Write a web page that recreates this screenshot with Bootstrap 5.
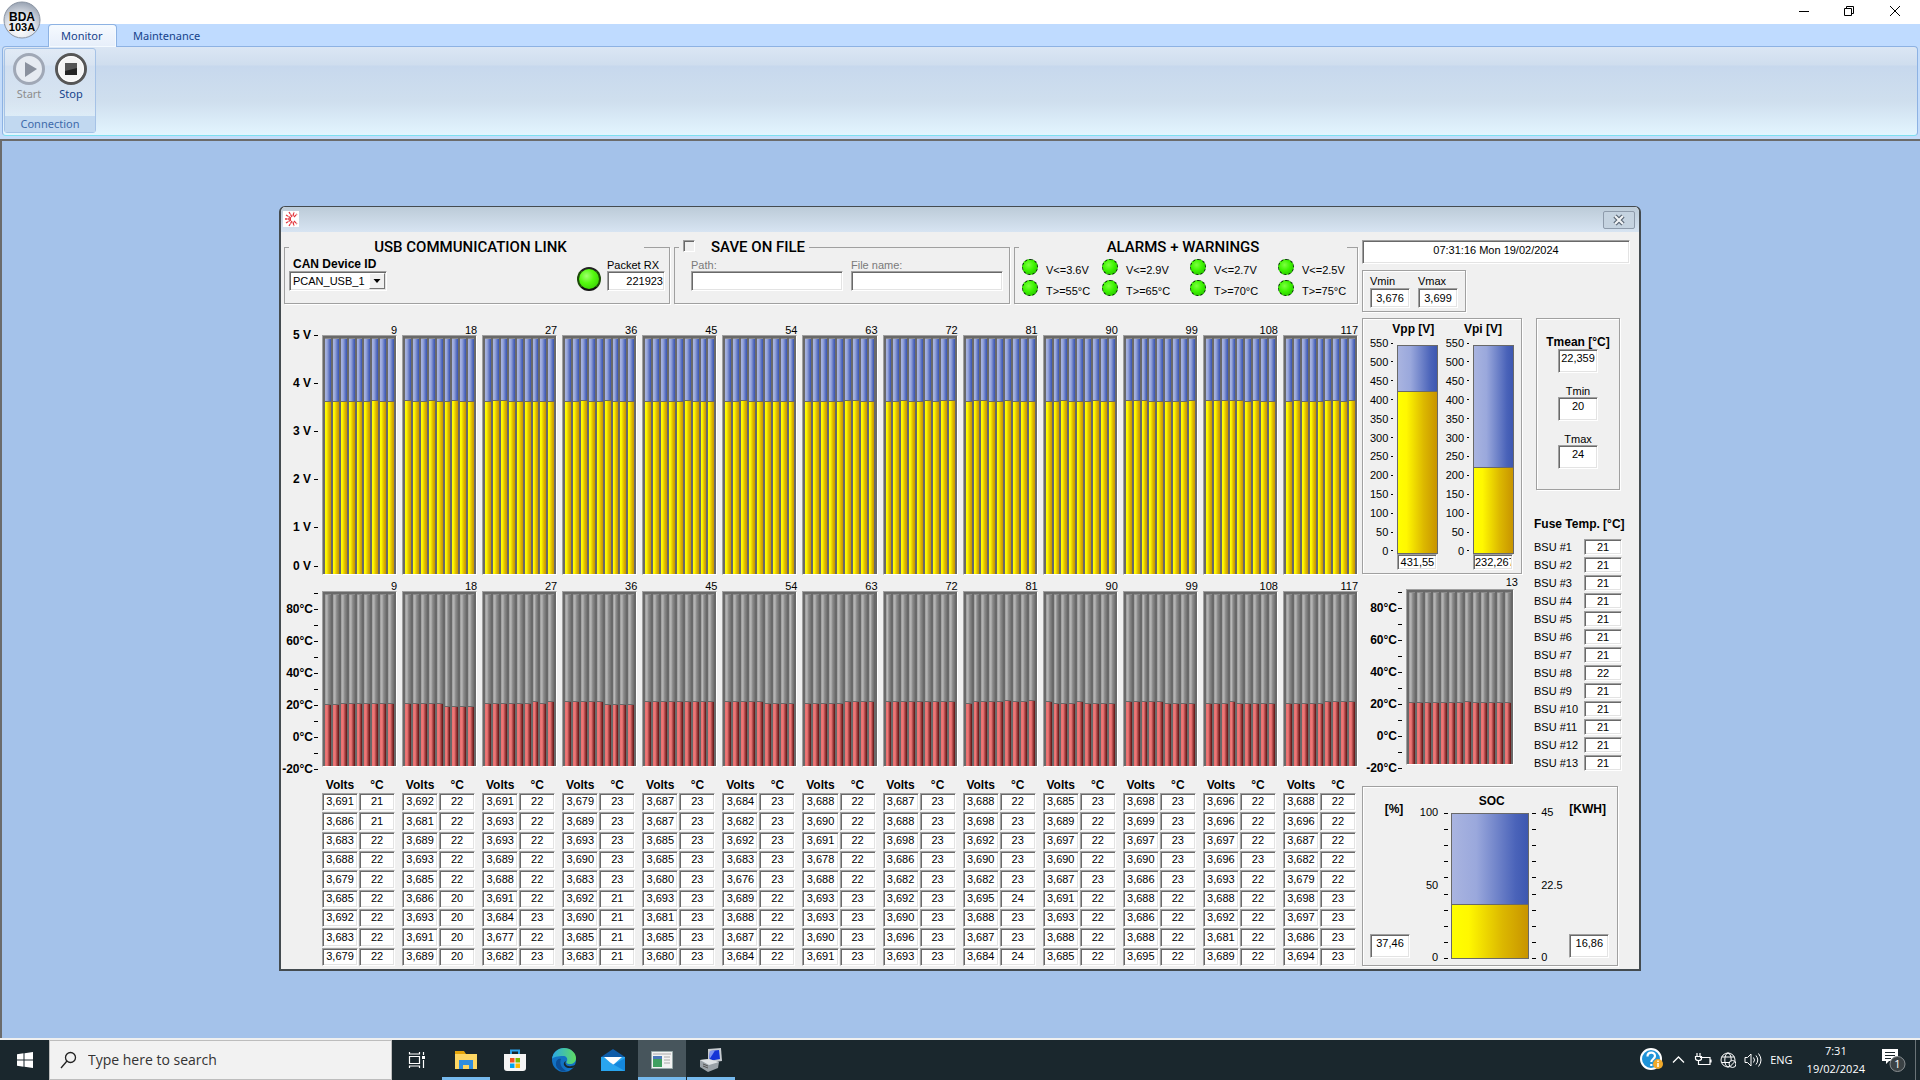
<!DOCTYPE html>
<html lang="en">
<head>
<meta charset="utf-8">
<meta name="viewport" content="width=device-width, initial-scale=1">
<title>BDA 103A Monitor</title>
<link href="https://cdn.jsdelivr.net/npm/bootstrap@5.3.0/dist/css/bootstrap.min.css" rel="stylesheet">
<style>
:root{--edge:#a0a0a0;--dark:#696969;--blue:linear-gradient(90deg,#a9b4e0,#9aa8dc 32%,#4a63b9 84%,#3d57b0);--gold:linear-gradient(90deg,#ffff00,#fff800 22%,#dcb800 66%,#c89400)}
body{font-family:"Liberation Sans",Arial,sans-serif;font-size:11px;line-height:12px;color:#000;background:#fff}
.shell{min-height:100vh}
/* ribbon */
.caption-bar{height:24px;background:#fff;padding-right:2px}
.cap-btn{width:46px;height:22px;border:0;background:none;padding:0}
.orb{left:3px;top:1px;z-index:5}
.tab-strip{height:22px;background:#bfdbff;padding-left:48px;font:11px/20px "Noto Sans",sans-serif}
.tab-strip a{color:#15428b;text-decoration:none;padding:2px 12px 0}
.tab-strip a.current{width:69px;border:1px solid #8db2e3;border-bottom:0;border-radius:4px 4px 0 0;background:linear-gradient(#f6faff,#e6eefa);margin-bottom:-1px;padding-top:1px;z-index:2;box-shadow:inset 0 0 0 1px #f4faff}
.ribbon-wrap{background:#c4dcfa;padding:0 2px 3px}
.ribbon{border:1px solid #8db2e3;border-color:#8db2e3 #8db2e3 #7ee0f0;border-radius:4px;height:90px;padding:1px;background:linear-gradient(#dbe6f4 0,#cfddee 18px,#c7d8ed 19px,#cfdfee 55px,#e3f5ff)}
.rgroup{width:92px;height:85px;border:1px solid #a5c2e6;border-radius:3px;background:linear-gradient(rgba(255,255,255,.2),rgba(255,255,255,.15));font:11px/16px "Noto Sans",sans-serif}
.rgroup-items{padding-left:3px}
.rgroup button{border:0;background:none;padding:3px 0 0;width:42px;color:#15428b}
.rgroup button:disabled{color:#8d8d8d}
.rgroup-name{background:#c1d8f0;color:#3e6aaa;height:16px}
/* MDI client */
.mdi{background:#a4c2ea;border:solid #6b6b6b;border-width:2px 0 0 2px;padding:65px 2px 60px 0}
.mdi-end{height:2px;background:#f0f0f0}
.child{max-width:1362px;border:1px solid #444b50;border-width:1px 2px 2px;border-radius:6px 6px 0 0;background:#f0f0f0}
.child-title{height:25px;border-radius:5px 5px 0 0;background:linear-gradient(#bccbd8,#d7e4f2);padding:4px 4px 0 2px}
.child-close{width:32px;height:18px;border:1px solid #8e9bab;border-radius:2px;background:#c5d3e0;padding:0}
.child-body{padding:8px 9px 2px 3px;gap:4px}
/* classic sunken and etched parts */
.etched{border:1px solid var(--edge);box-shadow:1px 1px 0 #fff,inset 1px 1px 0 #fff}
.sunk{background:#fff;border:1px solid;border-color:var(--edge) #fff #fff var(--edge);box-shadow:inset 1px 1px 0 var(--dark),inset -1px -1px 0 #e3e3e3;border-radius:0;padding:0 1px;color:#000;font:11px/14px "Liberation Sans",Arial,sans-serif;text-align:center}
.cap{font-size:12px;line-height:14px;font-weight:700}
.w40{width:40px}.w38{width:38px}
fieldset.gb{border:1px solid var(--edge);height:64px;box-shadow:1px 1px 0 #fff;font-size:11px;line-height:12px}
fieldset.gb legend{float:none;margin:0 0 0 4px;padding:0;text-align:left;font-family:Roboto,"Liberation Sans",sans-serif;font-weight:500;font-size:15px;line-height:14px}
.gb-usb{width:386px}.gb-save{width:336px}.gb-alarm{width:344px}
.gb-usb legend{width:355px}.gb-alarm legend{width:328px}
.gb-save legend{width:fit-content}
.dev-cap{margin-top:3px}
.link-status{gap:6px}
.led-big{margin-top:13px}
.fields{padding-top:5px}
.dim{color:#7a7a7a}
.file-field{width:152px}.rx-field{width:58px}
.gb input.sunk{height:20px}
.gb .tick-box{appearance:none;width:12px;height:12px;margin:0;background:#f0f0f0;border:1px solid;border-color:var(--edge) #fff #fff var(--edge);box-shadow:inset 1px 1px 0 var(--dark)}
.dev{width:98px}
.dev select{appearance:none;width:98px;height:20px;text-align:left;padding-left:3px}
.dev span{right:2px;top:2px;width:16px;height:16px;background:#f0f0f0;border:1px solid;border-color:#fff #777 #777 #fff;pointer-events:none}
.led{width:16px;height:16px;border-radius:50%;border:1px dashed #003000;background:radial-gradient(circle at 40% 35%,#7dff40,#3df400 45%,#22b400)}
.led-big{width:24px;height:24px;border:2px solid #101010;border-color:#222 #1c4a08 #111;background:radial-gradient(circle at 38% 35%,#a2ff70,#55fa10 40%,#2fc000)}
.lamp{padding:5px 0 0 8px}
.lamps{grid-template-columns:80px 88px 88px auto;row-gap:4px;padding:5px 0 0 7px}
/* charts */
.plots{margin-top:5px}
.axis{width:38px;flex:none;font-size:12px;font-weight:700}
.axis i,.scale i,.marks i{width:4px;height:1px;background:#000;flex:none}
.scale i{width:2px}
.axis-v{padding:2px 4px 0 0}
.axis-v div{height:48px;gap:3px}
.axis-v div:last-child{height:24px;padding-top:6px}
.axis-t{padding:10px 4px 0 0}
.axis-t div{height:16px;gap:1px;white-space:nowrap}
.groups{gap:5px}
.groups>div{flex:1 1 0}
.groups-t{padding-top:6px}
.chart{background:var(--dark);border:1px solid;border-color:var(--edge) #fff #fff var(--edge);padding:2px 2px 0;gap:2px}
.chart>div{flex:1 1 0;border-top:1px solid #8a8a8a}
.chart-v{height:240px}.chart-t{height:176px}
.chart-v>div{background:var(--blue)}
.chart-v b{background:var(--gold);border-top:1px solid #696969}
.chart-t>div{background:linear-gradient(90deg,#9a9a9a,#b8b8b8 30%,#8d8d8d 60%,#707070)}
.chart-t b{background:linear-gradient(90deg,#e87070,#f07878 35%,#a84444 65%,#5a1212);border-top:1px solid #696969}
.chart-end{line-height:10px}
.readings{border-collapse:separate;border-spacing:1px;table-layout:fixed;width:100%;margin:0 -1px}
.readings th{font-size:12px;line-height:13px;height:14px;padding:0;text-align:center}
.readings td{height:18px;line-height:15px;padding:0 0 1px}
.readings tbody tr:nth-child(3n+2) td{height:19px}
/* side column */
.side{width:268px;flex:none}
.clock{height:24px;padding-bottom:5px}
.vm{width:104px;height:42px;margin-top:6px;padding:3px 7px;gap:8px}
.vm label{line-height:14px}
.vm input{height:20px}
.mid{margin-top:6px}
.right{margin-left:12px}
.v-box{width:160px;height:256px;padding:3px 7px 0}
.scale{height:220px;justify-content:space-between;margin-top:1px}
.scale div{gap:3px}
.tube{border:1px solid var(--dark);background:var(--blue)}
.tube>b{background:var(--gold);border-top:1px solid var(--dark)}
.v-box .tube{width:41px;height:209px}
.col-tube{padding-top:9px}
.t-box{width:84px;height:172px;padding-top:16px;margin-left:2px}
.t-box input,.soc input{height:24px;padding-bottom:6px}
.t-next{margin-top:12px}
.fuse{margin:27px 0 7px}
.bsu-row{height:18px}
.bsu-row label{width:50px}
.bsu{height:202px}
.bsu .axis{width:40px;padding:10px 0 0}
.bsu-chart{width:108px;margin-left:4px}
.bsu-chart .cnt{padding-top:2px;height:15px;margin-right:-4px}
.soc{width:256px;height:180px;padding:7px;margin-top:10px}
.soc-mid{gap:3px;margin-top:-1px}
.soc .tube{width:78px;height:146px;margin-top:6px}
.marks{height:146px;margin-top:6px;justify-content:space-between}
.nums{height:157px;justify-content:space-between;margin:-1px 3px 0 2px}
/* taskbar */
.task{height:40px;background:#1a272d;color:#fff;font:11px/18px "Open Sans",sans-serif}
.task button{border:0;background:none;padding:0;width:48px;height:40px;color:#fff}
.task .start{width:49px}
.task .on{background:#47555c}
.task .run{box-shadow:inset 0 -3px 0 #76b9ed}
.pins{gap:1px;padding-left:1px}
.find{width:343px;height:40px;background:#f2f2f2;border:1px solid #bdbdbd;padding-left:10px}
.find input{border:0;background:none;font:14px/20px "Open Sans",sans-serif;color:#333;padding:0;outline:0}
.find input::placeholder{color:#333;opacity:1}
.tray{gap:8px}
.tray-clock{margin-left:6px}
.peek{width:5px;height:40px;border-left:1px solid #6a7377}
svg{display:block}
</style>
</head>
<body>
<div class="shell d-flex flex-column position-relative">
  <svg class="orb position-absolute" width="40" height="40" viewBox="0 0 40 40" aria-label="BDA 103A">
    <defs><radialGradient id="og" cx=".45" cy=".75" r=".8"><stop offset="0" stop-color="#fff"/><stop offset=".5" stop-color="#dfe3ea"/><stop offset="1" stop-color="#8f9aab"/></radialGradient></defs>
    <circle cx="19" cy="19" r="18" fill="url(#og)" stroke="#8a94a3"/>
    <text x="19" y="20" font-size="12" font-weight="700" text-anchor="middle" font-family="Liberation Sans">BDA</text>
    <text x="19" y="30" font-size="11" font-weight="700" text-anchor="middle" font-family="Liberation Sans">103A</text>
  </svg>
  <header>
    <div class="caption-bar d-flex justify-content-end">
      <button class="cap-btn" aria-label="Minimize"><svg width="46" height="22"><path d="M19 11.500h10" stroke="#000"/></svg></button>
      <button class="cap-btn" aria-label="Restore"><svg width="46" height="22"><path d="M18.500 8.500h7v7h-7zM20.500 8v-1.500h7v7h-1.500" fill="none" stroke="#000"/></svg></button>
      <button class="cap-btn" aria-label="Close"><svg width="46" height="22"><path d="M18 6l10 10M28 6l-10 10" stroke="#000"/></svg></button>
    </div>
    <nav class="tab-strip d-flex">
      <a href="#" class="current position-relative">Monitor</a>
      <a href="#" class="ms-1">Maintenance</a>
    </nav>
    <div class="ribbon-wrap">
      <div class="ribbon">
        <div class="rgroup d-flex flex-column justify-content-between text-center">
          <div class="rgroup-items d-flex">
            <button disabled><svg class="mx-auto" width="34" height="34" viewBox="0 0 34 34"><circle cx="17" cy="17" r="14.500" fill="#e6ebf2" stroke="#a0a8b6" stroke-width="3"/><path d="M13 10l12 7-12 8z" fill="#8a919e"/></svg>Start</button>
            <button><svg class="mx-auto" width="34" height="34" viewBox="0 0 34 34"><circle cx="17" cy="17" r="14.500" fill="#f4f4f4" stroke="#565656" stroke-width="3"/><circle cx="17" cy="17" r="12.500" fill="none" stroke="#fff"/><path d="M11 11h12v12h-12z" fill="#222"/><path d="M11 11h12v5l-12 3z" fill="#555"/></svg>Stop</button>
          </div>
          <div class="rgroup-name">Connection</div>
        </div>
      </div>
    </div>
  </header>

  <main class="mdi flex-grow-1 d-flex justify-content-center align-items-start">
    <section class="child w-100">
      <div class="child-title d-flex justify-content-between">
        <svg width="16" height="16" viewBox="0 0 16 16"><path fill="#fff" d="M0 0h16v16H0z"/><g stroke="#e2343c" stroke-width="1.300" stroke-dasharray="3 .5" fill="none"><path d="M8 8H2M8 7L3 4M8 9l-5 3M9 6L6 1M9 10l-3 5M10 5l1-4M10 11l1 4M11 6l3-3M11 10l3 3"/></g></svg>
        <button class="child-close" aria-label="Close"><svg class="mx-auto" width="14" height="12" viewBox="0 0 14 12"><path d="M3 2l8 8M11 2l-8 8" stroke="#566270" stroke-width="4.500"/><path d="M3 2l8 8M11 2l-8 8" stroke="#f2f4f6" stroke-width="2.200"/></svg></button>
      </div>
      <div class="child-body d-flex">
        <div class="flex-grow-1">
          <div class="d-flex gap-1">
            <fieldset class="gb gb-usb">
              <legend><span class="d-block text-center ps-2">USB COMMUNICATION LINK</span></legend>
              <div class="d-flex justify-content-between">
                <div class="ps-1">
                  <label for="dev" class="cap dev-cap d-block ms-1">CAN Device ID</label>
                  <div class="dev position-relative"><select id="dev" class="sunk"><option>PCAN_USB_1</option></select><span class="position-absolute"><svg width="14" height="14"><path d="M3.500 5h7L7 9z"/></svg></span></div>
                </div>
                <div class="link-status d-flex pe-1">
                  <div class="led led-big"></div>
                  <div class="fields"><label for="rx" class="d-block">Packet RX</label><input id="rx" class="sunk rx-field text-end" value="221923" readonly></div>
                </div>
              </div>
            </fieldset>
            <fieldset class="gb gb-save">
              <legend><span class="d-flex ps-1"><input type="checkbox" id="save" class="tick-box me-2"><label for="save" class="px-1 ms-1">SAVE ON FILE</label></span></legend>
              <div class="fields d-flex gap-2 ps-3 dim">
                <div><label for="path" class="d-block">Path:</label><input id="path" class="sunk file-field"></div>
                <div><label for="fname" class="d-block">File name:</label><input id="fname" class="sunk file-field"></div>
              </div>
            </fieldset>
            <fieldset class="gb gb-alarm">
              <legend><span class="d-block text-center">ALARMS + WARNINGS</span></legend>
              <div class="lamps d-grid" id="lamps"></div>
            </fieldset>
          </div>

          <div class="plots d-flex">
            <div class="axis axis-v" id="axisV"></div>
            <div class="groups d-flex flex-grow-1 pt-3" id="rowV"></div>
          </div>
          <div class="d-flex">
            <div class="axis axis-t" id="axisT"></div>
            <div class="groups groups-t d-flex flex-grow-1" id="rowT"></div>
          </div>
          <div class="d-flex">
            <div class="axis"></div>
            <div class="groups d-flex flex-grow-1" id="rowN"></div>
          </div>
        </div>

        <aside class="side d-flex flex-column">
          <input class="sunk clock" aria-label="Time" value="07:31:16 Mon 19/02/2024" readonly>
          <div class="etched vm d-flex">
            <div><label for="vmin" class="d-block">Vmin</label><input id="vmin" class="sunk w40" value="3,676" readonly></div>
            <div><label for="vmax" class="d-block">Vmax</label><input id="vmax" class="sunk w40" value="3,699" readonly></div>
          </div>
          <div class="d-flex mid">
            <div>
              <div class="etched v-box d-flex justify-content-between" id="vbox"></div>
              <div class="d-flex bsu">
                <div class="axis axis-t" id="axisB"></div>
                <div class="bsu-chart" id="bsuChart"></div>
              </div>
            </div>
            <div class="right">
              <div class="etched t-box d-flex flex-column align-items-center">
                <label for="tmean" class="cap">Tmean [°C]</label><input id="tmean" class="sunk w40" value="22,359" readonly>
                <label for="tmin" class="t-next">Tmin</label><input id="tmin" class="sunk w40" value="20" readonly>
                <label for="tmax" class="t-next">Tmax</label><input id="tmax" class="sunk w40" value="24" readonly>
              </div>
              <div class="cap fuse">Fuse Temp. [°C]</div>
              <div id="bsu"></div>
            </div>
          </div>
          <div class="etched soc d-flex justify-content-between">
            <div class="d-flex flex-column justify-content-between"><label for="pct" class="cap text-center mt-2 ps-2">[%]</label><input id="pct" class="sunk w40" value="37,46" readonly></div>
            <div class="ps-1">
              <div class="cap text-center">SOC</div>
              <div class="d-flex soc-mid" id="soc"></div>
            </div>
            <div class="d-flex flex-column justify-content-between"><label for="kwh" class="cap text-center mt-2 pe-1">[KWH]</label><input id="kwh" class="sunk w40" value="16,86" readonly></div>
          </div>
        </aside>
      </div>
    </section>
  </main>
  <div class="mdi-end"></div>

  <footer class="task d-flex justify-content-between">
    <div class="d-flex">
      <button class="start" aria-label="Start menu"><svg class="mx-auto" width="16" height="16"><path fill="#fff" d="M0 2.200L6.500 1.300V7.500H0zM7.500 1.200L16 0v7.500H7.500zM0 8.500h6.500v6.200L0 13.800zM7.500 8.500H16V16l-8.500-1.200z"/></svg></button>
      <div class="find d-flex align-items-center gap-2">
        <svg width="20" height="20" viewBox="0 0 20 20"><g fill="none" stroke="#222" stroke-width="1.300"><circle cx="10.500" cy="7.500" r="5"/><path d="M7 11l-6 7"/></g></svg>
        <input type="search" aria-label="Search" placeholder="Type here to search">
      </div>
      <div class="pins d-flex">
        <button aria-label="Task view"><svg class="mx-auto" width="18" height="18" viewBox="0 0 18 18"><g fill="none" stroke="#fff" stroke-width="1.200"><path d="M1.500 5.500h10v7h-10zM1.500 1v2h10V1M1.500 17v-2h10v2M15.500 1v3M15.500 9v8"/></g><path fill="#fff" d="M14 5h3v3h-3z"/></svg></button>
        <button class="run" aria-label="File Explorer"><svg class="mx-auto" width="24" height="20" viewBox="0 0 24 20"><path fill="#e5a50a" d="M1 1h9l2 3H1z"/><path fill="#fdd663" d="M1 4h22v15H1z"/><path fill="#2f8de0" d="M5 10h14v9h-4v-4H9v4H5z"/></svg></button>
        <button aria-label="Store"><svg class="mx-auto" width="24" height="24" viewBox="0 0 24 24"><path d="M8 7V2.500h8V7" fill="none" stroke="#2aa0ea" stroke-width="2"/><path fill="#f5f5f5" d="M1 6h22v14q0 3-3 3H4q-3 0-3-3z"/><path fill="#f25022" d="M7 10h4.500v4.500H7z"/><path fill="#7fba00" d="M12.500 10H17v4.500h-4.500z"/><path fill="#00a4ef" d="M7 15.500h4.500V20H7z"/><path fill="#ffb900" d="M12.500 15.500H17V20h-4.500z"/></svg></button>
        <button aria-label="Edge"><svg class="mx-auto" width="24" height="24" viewBox="0 0 24 24"><defs><linearGradient id="eg"><stop offset="0" stop-color="#2aa8e8"/><stop offset="1" stop-color="#5fdc60"/></linearGradient></defs><circle cx="12" cy="12" r="12" fill="#1272c4"/><path fill="url(#eg)" d="M0 11C1 4 6 0 12 0c7 0 12 5 12 10 0 4-3 6-6 6-4 0-4-2-3-3 1-3-1-5-4-5C6 8 1 9 0 11z"/><path fill="#0d4e96" d="M9 11c-2 5 1 10 6 12-6 2-12-3-11-8 0-3 3-5 5-4z"/><path fill="#1a272d" d="M14 13c-2 3 1 6 5 5 2 0 4-1 5-2-2 5-5 4-8 4-4-1-6-5-2-7z"/></svg></button>
        <button aria-label="Mail"><svg class="mx-auto" width="24" height="24" viewBox="0 0 24 24"><path fill="#0f5ca8" d="M0 9L12 1l12 8v4H0z"/><path fill="#29a5ee" d="M0 9h24v14H0z"/><path fill="#fff" d="M3 9h18l-9 8z"/><path fill="#1487dc" d="M24 10v13L9 14.500l3 2.500z"/></svg></button>
        <button class="run on" aria-label="BDA monitor"><svg class="mx-auto" width="22" height="18" viewBox="0 0 22 18"><path fill="#f3f3f3" stroke="#9aa" d="M.5.500h21v17H.5z"/><path fill="#4a78b8" d="M2 5h9v5H2z"/><path fill="#3fa060" d="M2 8h9v8H2z"/><path stroke="#aaa" d="M2 3h18M13 6h6M13 9h6M13 12h6"/></svg></button>
        <button class="run" aria-label="Device tool"><svg class="mx-auto" width="24" height="24" viewBox="0 0 24 24"><path fill="#c6cbd0" d="M9 1l13-1 1 13-14 2z"/><path fill="#1433d6" d="M11 3l9-1 1 9-11 2z"/><path fill="#7f95f0" d="M11 3l5-.5L10 12z"/><path fill="#9aa2a8" d="M1 12l9-1 10 3-1 6-10 4-8-5z"/><path fill="#dfe3e6" d="M1 12l9-1 10 3-10 3z"/><path stroke="#555" d="M4 16l5 2M4 18l5 2"/></svg></button>
      </div>
    </div>
    <div class="tray d-flex align-items-center">
      <svg width="24" height="24" viewBox="0 0 24 24"><circle cx="11" cy="11" r="10" fill="#1f93d8" stroke="#fff" stroke-width="2"/><path d="M7.500 8.500c0-5 7.500-5 7.500-.5 0 3-3.700 3-3.700 6M11.300 16v2" fill="none" stroke="#fff" stroke-width="2.200"/><circle cx="18" cy="16" r="5" fill="#f0a92a"/><path stroke="#fff" stroke-width="1.500" d="M18 12.500v1.500M18 15v4"/></svg>
      <svg width="14" height="16"><path d="M1 10.500l5.500-5.500 5.500 5.500" fill="none" stroke="#fff" stroke-width="1.300"/></svg>
      <svg width="18" height="16" viewBox="0 0 18 16"><path d="M6 5.500h10v7H6M17 7.500v3M3 1v3M6 1v3M1.500 4.500h6v2q0 2-3 2t-3-2zM4.500 9v3.500h2" fill="none" stroke="#fff" stroke-width="1.200"/></svg>
      <svg width="16" height="16" viewBox="0 0 16 16"><g fill="none" stroke="#fff"><circle cx="8" cy="8" r="7"/><ellipse cx="8" cy="8" rx="3.200" ry="7"/><path d="M1.500 5h13M1.500 10.500h13"/></g><circle cx="12.500" cy="12" r="3.500" fill="#1a272d" stroke="#fff"/><path d="M10 14.500l5-5" stroke="#fff"/></svg>
      <svg width="18" height="16" viewBox="0 0 18 16"><path d="M1 5.500h2.500L7 2v12l-3.500-3.500H1zM9.500 5.500q2 2.500 0 5M12 3.500q3.500 4.500 0 9M14.500 1.500q5 6.500 0 13" fill="none" stroke="#fff"/></svg>
      <span>ENG</span>
      <div class="tray-clock text-center">7:31<br>19/02/2024</div>
      <svg class="ms-2" width="26" height="26" viewBox="0 0 26 26"><path fill="#fff" d="M1 2h16v12H8l-3 3v-3H1z"/><path stroke="#1a272d" d="M4 5.500h10M4 8.500h10M4 11.500h6"/><circle cx="16.500" cy="17" r="7.500" fill="#3b4245" stroke="#8a8f92"/><text x="16.500" y="21" fill="#fff" font-size="11" text-anchor="middle" font-family="Open Sans">1</text></svg>
      <span class="peek"></span>
    </div>
  </footer>
</div>
<script src="https://cdn.jsdelivr.net/npm/bootstrap@5.3.0/dist/js/bootstrap.bundle.min.js"></script>
<script>
// Nine cell voltages (thousandths above 3 V) and nine temperatures per module
const modules = [
 ['691 686 683 688 679 685 692 683 679','21 21 22 22 22 22 22 22 22'],
 ['692 681 689 693 685 686 693 691 689','22 22 22 22 22 20 20 20 20'],
 ['691 693 693 689 688 691 684 677 682','22 22 22 22 22 22 23 22 23'],
 ['679 689 693 690 683 692 690 685 683','23 23 23 23 23 21 21 21 21'],
 ['687 687 685 685 680 693 681 685 680','23 23 23 23 23 23 23 23 23'],
 ['684 682 692 683 676 689 688 687 684','23 23 23 23 23 22 22 22 22'],
 ['688 690 691 678 688 693 693 690 691','22 22 22 22 22 23 23 23 23'],
 ['687 688 698 686 682 692 690 696 693','23 23 23 23 23 23 23 23 23'],
 ['688 698 692 690 682 695 688 687 684','22 23 23 23 23 24 23 23 24'],
 ['685 689 697 690 687 691 693 688 685','23 22 22 22 23 22 22 22 22'],
 ['698 699 697 690 686 688 686 688 695','23 23 23 23 23 22 22 22 22'],
 ['696 696 697 696 693 688 692 681 689','22 22 22 23 22 22 22 22 22'],
 ['688 696 687 682 679 698 697 686 694','22 22 22 22 22 23 23 23 23']
].map(m => m.map(s => s.split(' ')));
const fuses = [21,21,21,21,21,21,21,22,21,21,21,21,21];
const $ = id => document.getElementById(id);
const bar = p => `<div class="d-flex flex-column justify-content-end"><b style="height:${p}%"></b></div>`;
const tempPct = t => ((+t + 20) / 110 * 97).toFixed(1);
const voltPct = v => ((3 + v / 1000) / 5 * 100).toFixed(2);
const col = (n, cls, bars) => `<div><div class="text-end chart-end">${n}</div><div class="chart ${cls} d-flex">${bars}</div></div>`;
$('rowV').innerHTML = modules.map((m,i) => col((i+1)*9, 'chart-v', m[0].map(v => bar(voltPct(v))).join(''))).join('');
$('rowT').innerHTML = modules.map((m,i) => col((i+1)*9, 'chart-t', m[1].map(t => bar(tempPct(t))).join(''))).join('');
$('rowN').innerHTML = modules.map(m => `<div><table class="readings"><thead><tr><th>Volts</th><th>°C</th></tr></thead><tbody>${m[0].map((v,i)=>`<tr><td class="sunk">3,${v}</td><td class="sunk">${m[1][i]}</td></tr>`).join('')}</tbody></table></div>`).join('');
$('axisV').innerHTML = [5,4,3,2,1,0].map(v => `<div class="d-flex align-items-center justify-content-end">${v} V<i></i></div>`).join('');
const tAxis = ['','80°C','','60°C','','40°C','','20°C','','0°C','','-20°C'].map(t => `<div class="d-flex align-items-center justify-content-end">${t}<i></i></div>`).join('');
$('axisT').innerHTML = tAxis; $('axisB').innerHTML = tAxis;
$('bsuChart').innerHTML = `<div class="text-end cnt">13</div><div class="chart chart-t d-flex">${fuses.map(t => bar(tempPct(t))).join('')}</div>`;
$('bsu').innerHTML = fuses.map((t,i) => `<div class="bsu-row d-flex align-items-center"><label for="b${i}">BSU #${i+1}</label><input id="b${i}" class="sunk w38" value="${t}" readonly></div>`).join('');
const steps = Array.from({length:12}, (_,i) => 550 - i*50);
$('vbox').innerHTML = [['Vpp [V]','431,55',78.5,'pe-1'],['Vpi [V]','232,267',41.5,'pe-2 me-1']].map((g,i) => `<div><label class="cap d-block text-end ${g[3]}" for="g${i}">${g[0]}</label><div class="d-flex gap-1"><div class="scale d-flex flex-column">${steps.map(s=>`<div class="d-flex align-items-center justify-content-end">${s}<i></i></div>`).join('')}</div><div class="col-tube"><div class="tube d-flex flex-column justify-content-end"><b style="height:${g[2]}%"></b></div><input id="g${i}" class="sunk w40 d-block" value="${g[1]}" readonly></div></div></div>`).join('');
const marks = `<div class="marks d-flex flex-column">${'<i></i>'.repeat(10)}</div>`;
$('soc').innerHTML = `<div class="nums d-flex flex-column text-end"><span>100</span><span>50</span><span>0</span></div>${marks}<div class="tube d-flex flex-column justify-content-end"><b style="height:37.46%"></b></div>${marks}<div class="nums d-flex flex-column"><span>45</span><span>22.5</span><span>0</span></div>`;
$('lamps').innerHTML = ['V<=3.6V','V<=2.9V','V<=2.7V','V<=2.5V','T>=55°C','T>=65°C','T>=70°C','T>=75°C'].map(t => `<div class="d-flex"><div class="led"></div><span class="lamp">${t.replace('<','&lt;')}</span></div>`).join('');
</script>
</body>
</html>
